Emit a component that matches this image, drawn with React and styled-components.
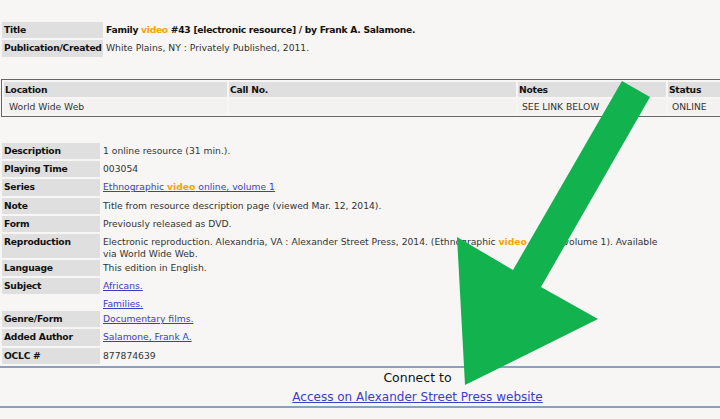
import React from "react";
import styled, { createGlobalStyle } from "styled-components";

const Global = createGlobalStyle`
  html, body { margin: 0; padding: 0; background: #f7f6f4; }
  body { font-family: "DejaVu Sans", Verdana, sans-serif; font-size: 9.2px; color: #333; }
`;

const Page = styled.div`
  position: relative;
  width: 720px;
  height: 419px;
  overflow: hidden;
  padding-top: 22px;
  box-sizing: border-box;
`;

const Fields = styled.div`
  display: grid;
  grid-template-columns: ${(p) => p.$label}px ${(p) => p.$value}px;
  column-gap: 2px;
  row-gap: 2px;
  padding-left: 2px;
  margin-top: ${(p) => p.$top || 0}px;
`;

const Label = styled.div`
  background: ${(p) => (p.$empty ? "transparent" : "#dfdfdf")};
  color: #111;
  font-weight: bold;
  letter-spacing: -0.25px;
  padding: ${(p) => (p.$empty ? "0" : "2px 2px")};
  min-height: ${(p) => (p.$empty ? "12.7px" : "0")};
  line-height: 12.33px;
`;

const Value = styled.div`
  padding: 2px 1px 0;
  margin-bottom: -2px;
  line-height: 11.7px;
  color: #333;
  ${(p) => p.$bold && "font-weight: bold; color: #111; letter-spacing: -0.28px;"}
`;

const Hl = styled.span`
  color: #f5a300;
  font-weight: bold;
`;

const Link = styled.a`
  color: #3c3cc8;
  text-decoration: underline;
`;

const Holdings = styled.table`
  margin: 22px 0 0 1px;
  width: 722px;
  border: 1px solid #666;
  border-spacing: 2px;
  border-collapse: separate;
  font-size: 9.2px;
`;

const Th = styled.th`
  background: #dfdfdf;
  text-align: left;
  font-weight: bold;
  letter-spacing: -0.25px;
  color: #111;
  padding: 2px 1px;
  line-height: 11px;
  width: ${(p) => p.$w}px;
`;

const Td = styled.td`
  background: #f3f2f0;
  padding: 2px ${(p) => p.$pl || 4}px 1px;
  line-height: 12px;
  color: #333;
`;

const Connect = styled.div`
  margin-top: 2px;
  border-top: 2px solid #8aa2c0;
  border-bottom: 2px solid #8aa2c0;
  padding: 1px 0 0 115px;
  text-align: center;
  font-size: 12px;
  line-height: 18.5px;
  width: 720px;
  box-sizing: border-box;
`;

const ConnectTitle = styled.div`
  color: #111;
  font-size: 12.5px;
`;

const Arrow = styled.svg`
  position: absolute;
  left: 0;
  top: 0;
  pointer-events: none;
`;

export default function App() {
  return (
    <>
      <Global />
      <Page>
        <Fields $label={101} $value={610}>
          <Label>Title</Label>
          <Value $bold>
            Family <Hl>video</Hl> #43 [electronic resource] / by Frank A. Salamone.
          </Value>
          <Label>Publication/Created</Label>
          <Value>White Plains, NY : Privately Published, 2011.</Value>
        </Fields>

        <Holdings>
          <thead>
            <tr>
              <Th $w={221}>Location</Th>
              <Th $w={285}>Call No.</Th>
              <Th $w={146}>Notes</Th>
              <Th>Status</Th>
            </tr>
          </thead>
          <tbody>
            <tr>
              <Td $pl={5}>World Wide Web</Td>
              <Td></Td>
              <Td>SEE LINK BELOW</Td>
              <Td>ONLINE</Td>
            </tr>
          </tbody>
        </Holdings>

        <Fields $label={98} $value={562} $top={26}>
          <Label>Description</Label>
          <Value>1 online resource (31 min.).</Value>
          <Label>Playing Time</Label>
          <Value>003054</Value>
          <Label>Series</Label>
          <Value>
            <Link href="#">
              Ethnographic <Hl>video</Hl> online, volume 1
            </Link>
          </Value>
          <Label>Note</Label>
          <Value>Title from resource description page (viewed Mar. 12, 2014).</Value>
          <Label>Form</Label>
          <Value>Previously released as DVD.</Value>
          <Label>Reproduction</Label>
          <Value>
            Electronic reproduction. Alexandria, VA : Alexander Street Press, 2014. (Ethnographic{" "}
            <Hl>video</Hl> online, volume 1). Available via World Wide Web.
          </Value>
          <Label>Language</Label>
          <Value>This edition in English.</Value>
          <Label>Subject</Label>
          <Value>
            <Link href="#">Africans.</Link>
          </Value>
          <Label $empty />
          <Value>
            <Link href="#">Families.</Link>
          </Value>
          <Label>Genre/Form</Label>
          <Value>
            <Link href="#">Documentary films.</Link>
          </Value>
          <Label>Added Author</Label>
          <Value>
            <Link href="#">Salamone, Frank A.</Link>
          </Value>
          <Label>OCLC #</Label>
          <Value>877874639</Value>
        </Fields>

        <Connect>
          <ConnectTitle>Connect to</ConnectTitle>
          <Link href="#">Access on Alexander Street Press website</Link>
        </Connect>

        <Arrow width="720" height="419" viewBox="0 0 720 419">
          <polygon
            fill="#12b24f"
            points="622,81 650,97 541,287 598,319 465,385 457,237 513,270"
          />
        </Arrow>
      </Page>
    </>
  );
}
